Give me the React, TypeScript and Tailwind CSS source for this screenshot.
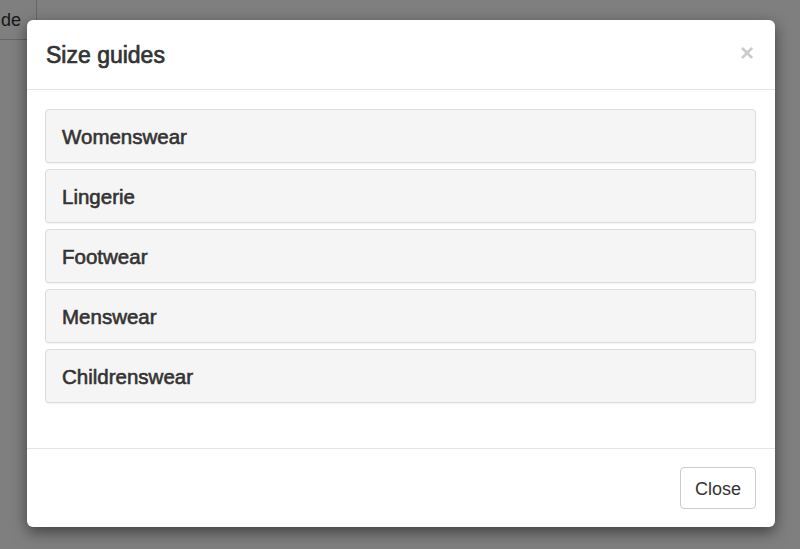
const guides = ["Womenswear", "Lingerie", "Footwear", "Menswear", "Childrenswear"];

export default function App() {
  return (
    <div
      className="relative h-[549px] w-[800px] overflow-hidden bg-white text-[#333]"
      style={{ fontFamily: '"Liberation Sans", Arial, sans-serif' }}
    >
      {/* Page content behind the backdrop: the trigger button, mostly off-screen */}
      <button className="absolute left-[-20px] top-[-6px] h-[46px] rounded-[4px] border border-[#ccc] bg-white pl-[20px] pr-[15px] pt-[7px] text-[18px] text-[#333]">
        de
      </button>

      {/* Backdrop */}
      <div className="absolute inset-0 bg-black/50" />

      {/* Modal */}
      <div className="absolute left-[27px] top-[20px] flex h-[507px] w-[748px] flex-col rounded-[6px] bg-white shadow-[0_5px_15px_rgba(0,0,0,0.5)]">
        <div className="flex h-[70px] items-center justify-between border-b border-[#e5e5e5] pl-[19px] pr-[21px]">
          <h4 className="pt-[1px] text-[23px] font-normal text-[#333] [-webkit-text-stroke:0.7px_#333]">
            Size guides
          </h4>
          <button className="pb-[4px] text-[24px] font-bold leading-none text-black opacity-20">
            ×
          </button>
        </div>

        <div className="flex flex-1 flex-col gap-[6px] pl-[18px] pr-[19px] pt-[19px]">
          {guides.map((g) => (
            <div
              key={g}
              className="flex h-[54px] items-center rounded-[4px] border border-[#ddd] bg-[#f5f5f5] px-[16px] pt-[2px] shadow-[0_1px_1px_rgba(0,0,0,0.05)]"
            >
              <span className="text-[20.5px] font-normal text-[#333] [-webkit-text-stroke:0.6px_#333]">
                {g}
              </span>
            </div>
          ))}
        </div>

        <div className="flex h-[79px] items-center justify-end border-t border-[#e5e5e5] pr-[19px]">
          <button className="h-[42px] w-[76px] rounded-[4px] border border-[#ccc] bg-white pt-[2px] text-[18px] text-[#333]">
            Close
          </button>
        </div>
      </div>
    </div>
  );
}
